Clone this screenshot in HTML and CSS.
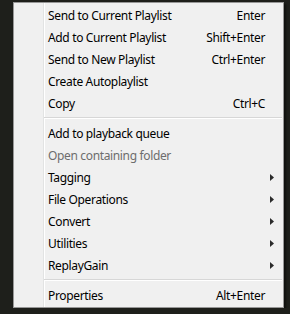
FILE: index.html
```html
<!DOCTYPE html>
<html>
<head>
<meta charset="utf-8">
<link rel="stylesheet" href="styles.css">
</head>
<body>
<div class="menu">
  <div class="item"><span class="label">Send to Current Playlist</span><span class="key">Enter</span></div>
  <div class="item"><span class="label">Add to Current Playlist</span><span class="key">Shift+Enter</span></div>
  <div class="item"><span class="label">Send to New Playlist</span><span class="key">Ctrl+Enter</span></div>
  <div class="item"><span class="label">Create Autoplaylist</span></div>
  <div class="item"><span class="label">Copy</span><span class="key">Ctrl+C</span></div>
  <div class="sep"></div>
  <div class="item"><span class="label">Add to playback queue</span></div>
  <div class="item disabled"><span class="label">Open containing folder</span></div>
  <div class="item sub"><span class="label">Tagging</span><svg class="arrow" width="4" height="7" viewBox="0 0 4 7"><polygon points="0,0 4,3.5 0,7"/></svg></div>
  <div class="item sub"><span class="label">File Operations</span><svg class="arrow" width="4" height="7" viewBox="0 0 4 7"><polygon points="0,0 4,3.5 0,7"/></svg></div>
  <div class="item sub"><span class="label">Convert</span><svg class="arrow" width="4" height="7" viewBox="0 0 4 7"><polygon points="0,0 4,3.5 0,7"/></svg></div>
  <div class="item sub"><span class="label">Utilities</span><svg class="arrow" width="4" height="7" viewBox="0 0 4 7"><polygon points="0,0 4,3.5 0,7"/></svg></div>
  <div class="item sub"><span class="label">ReplayGain</span><svg class="arrow" width="4" height="7" viewBox="0 0 4 7"><polygon points="0,0 4,3.5 0,7"/></svg></div>
  <div class="sep"></div>
  <div class="item"><span class="label">Properties</span><span class="key">Alt+Enter</span></div>
</div>
</body>
</html>
```
FILE: styles.css
```css
html, body {
  margin: 0;
  padding: 0;
  background: #1e1f1b;
}
body {
  padding: 2px 0 0 13px;
  font-family: "Noto Sans", "Liberation Sans", sans-serif;
  font-size: 12px;
  letter-spacing: -0.35px;
  color: #000;
}
.menu {
  width: 271px;
  box-sizing: border-box;
  border: 1px solid #979797;
  background-color: #f0f0f0;
  background-image: linear-gradient(to right, transparent 29px, #e2e3e3 29px, #e2e3e3 30px, #ffffff 30px, #ffffff 31px, transparent 31px);
  padding: 1px 0 1px 0;
  box-shadow: 2px 2px 2px rgba(0, 0, 0, 0.5);
  display: flex;
  flex-direction: column;
}
.item {
  height: 22px;
  display: flex;
  align-items: center;
  padding: 0 18px 0 34px;
}
.label {
  flex: 1;
  white-space: nowrap;
}
.key {
  white-space: nowrap;
}
.disabled {
  color: #6d6d6d;
}
.sub {
  padding-right: 9px;
}
.arrow {
  fill: #2b2b2b;
  display: block;
}
.sep {
  height: 8px;
  margin-left: 30px;
  margin-right: 1px;
  display: flex;
  flex-direction: column;
  justify-content: center;
}
.sep::before {
  content: "";
  display: block;
  height: 1px;
  background: #d7d7d7;
  border-bottom: 1px solid #ffffff;
}
```
